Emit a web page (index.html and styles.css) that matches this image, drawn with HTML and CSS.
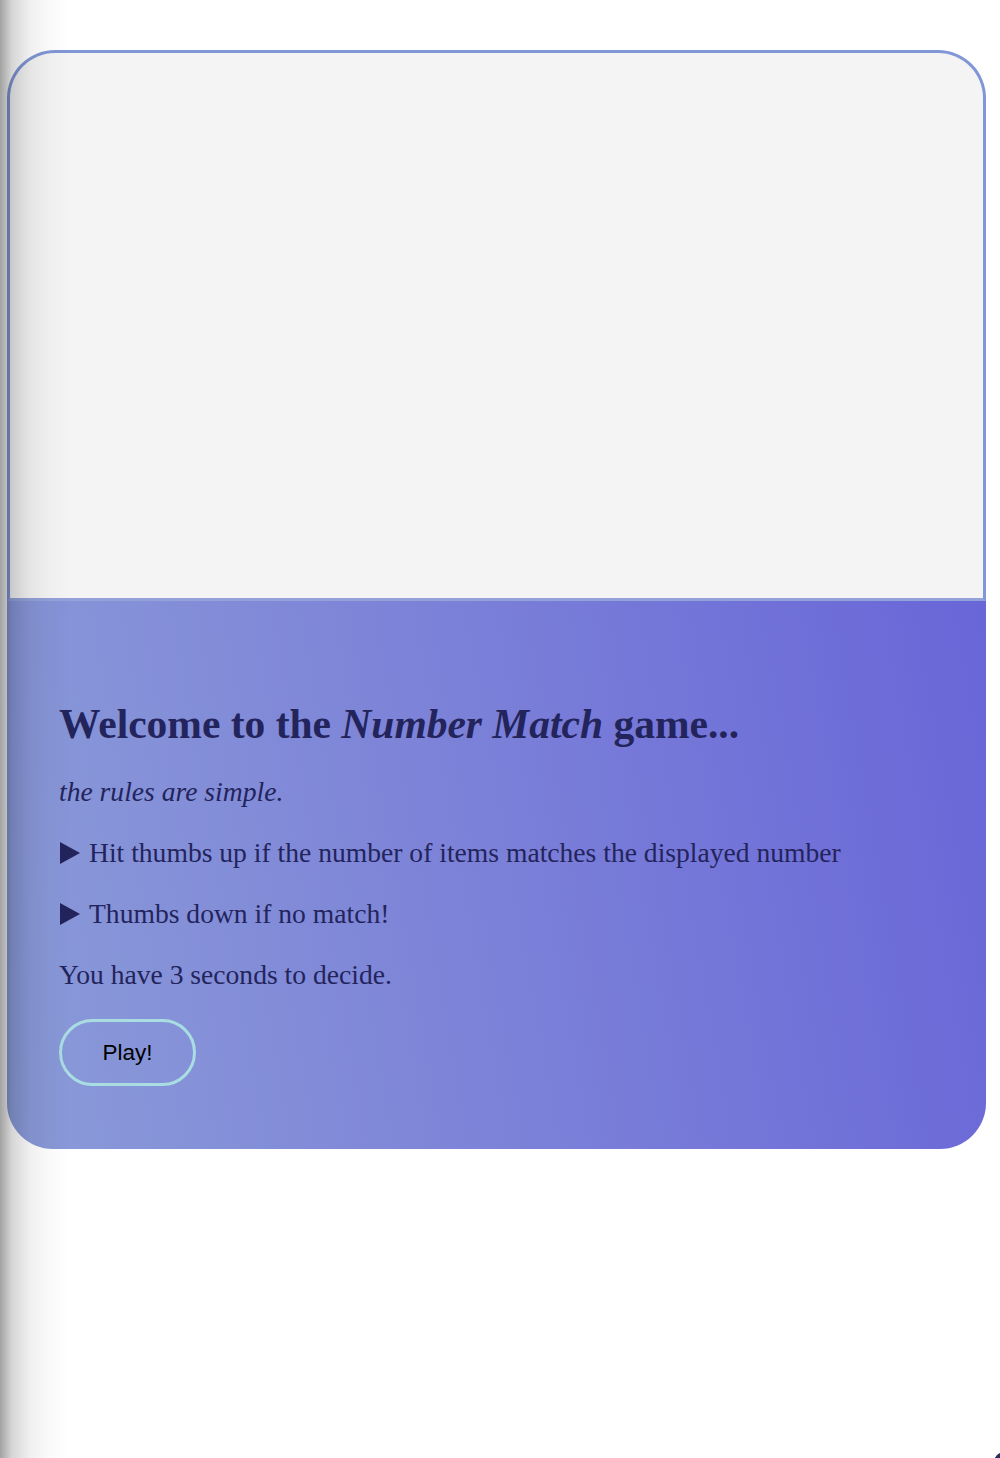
FILE: index.html
```html
<!DOCTYPE html>
<html>
<head>
<meta charset="utf-8">
<link rel="stylesheet" href="styles.css">
</head>
<body>
<div class="shade"></div>
<main class="card">
  <section class="stage"></section>
  <section class="intro">
    <h1 class="title">Welcome to the <em>Number Match</em> game...</h1>
    <p class="subtitle">the rules are simple.</p>
    <p class="rule"><svg class="arrow" viewBox="0 0 20 22" width="20" height="22"><polygon points="0,0 20,11 0,22"/></svg>Hit thumbs up if the number of items matches the displayed number</p>
    <p class="rule"><svg class="arrow" viewBox="0 0 20 22" width="20" height="22"><polygon points="0,0 20,11 0,22"/></svg>Thumbs down if no match!</p>
    <p class="rule">You have 3 seconds to decide.</p>
    <button class="play">Play!</button>
  </section>
</main>
<div class="corner"></div>
</body>
</html>
```
FILE: styles.css
```css
html, body {
  margin: 0;
  padding: 0;
  background: #ffffff;
  width: 1000px;
  height: 1458px;
  overflow: hidden;
}
body {
  font-family: "Liberation Serif", "Times New Roman", serif;
  color: #23245c;
}
.shade {
  position: fixed;
  left: 0;
  top: 0;
  width: 70px;
  height: 1458px;
  background: linear-gradient(90deg, rgba(0,0,0,0.36) 0px, rgba(0,0,0,0.16) 12px, rgba(0,0,0,0.06) 30px, rgba(0,0,0,0.02) 50px, rgba(0,0,0,0) 70px);
  pointer-events: none;
  z-index: 10;
}
.card {
  margin: 50px 0 0 7px;
  width: 979px;
  display: flex;
  flex-direction: column;
}
.stage {
  height: 551px;
  box-sizing: border-box;
  background: #f4f4f4;
  border: 3px solid #8196d6;
  border-bottom: 3px solid #93a3da;
  border-radius: 48px 48px 0 0;
}
.intro {
  height: 548px;
  box-sizing: border-box;
  padding: 99px 0 0 52px;
  background: linear-gradient(80deg, #8a9bd8 0%, #7d83d8 45%, #6966d8 100%);
  border-radius: 0 0 46px 46px;
}
.title {
  margin: 0;
  font-size: 41.5px;
  font-weight: bold;
  line-height: 48px;
}
.title em {
  font-style: italic;
}
.subtitle {
  margin: 28px 0 0;
  font-size: 27.6px;
  font-style: italic;
  line-height: 32px;
}
.rule {
  margin: 29px 0 0;
  font-size: 27.6px;
  line-height: 32px;
}
.arrow {
  display: inline-block;
  vertical-align: -2px;
  margin: 0 9px 0 1px;
  fill: #23245c;
}
.play {
  margin-top: 28px;
  width: 137px;
  height: 67px;
  border: 3px solid #a9dde2;
  border-radius: 34px;
  background: transparent;
  font-family: "Liberation Sans", Arial, sans-serif;
  font-size: 22.5px;
  color: #000;
  padding: 0;
}
.corner {
  position: fixed;
  right: -14px;
  bottom: -14px;
  width: 20px;
  height: 20px;
  border-radius: 50%;
  background: #2c2e58;
}
```
